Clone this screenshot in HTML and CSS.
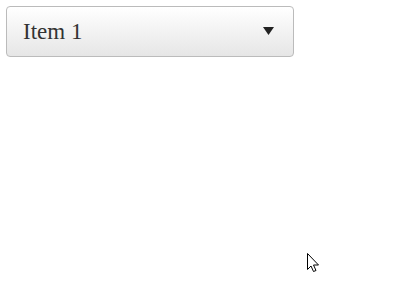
FILE: index.html
```html
<!DOCTYPE html>
<html>
<head>
<meta charset="utf-8">
<link rel="stylesheet" href="styles.css">
</head>
<body>
<div class="select">
  <span class="label">Item 1</span>
  <svg class="caret" width="11" height="8" viewBox="0 0 11 8"><path d="M0 0H11L5.5 8Z" fill="#222"/></svg>
</div>
<svg class="cursor" width="14" height="22" viewBox="0 0 14 22">
  <path d="M1.5 1.5V17.5L5 14L7.5 19.5L10 18.5L7.5 13H12.5Z" fill="#fff" stroke="#000" stroke-width="1" stroke-linejoin="miter"/>
</svg>
</body>
</html>
```
FILE: styles.css
```css
html, body {
  margin: 0;
  background: #fff;
}
body {
  padding: 6px;
  font-family: "Liberation Serif", "Times New Roman", serif;
}
.select {
  box-sizing: border-box;
  width: 288px;
  height: 51px;
  border: 1px solid #bbb;
  border-radius: 4px;
  background: linear-gradient(#ffffff, #e6e6e6);
  display: flex;
  align-items: center;
  justify-content: space-between;
  padding: 0 19px 0 16px;
}
.label {
  font-size: 23px;
  color: #333;
}
.caret {
  display: block;
  margin-top: -1px;
}
.cursor {
  position: absolute;
  left: 306px;
  top: 252px;
}
```
